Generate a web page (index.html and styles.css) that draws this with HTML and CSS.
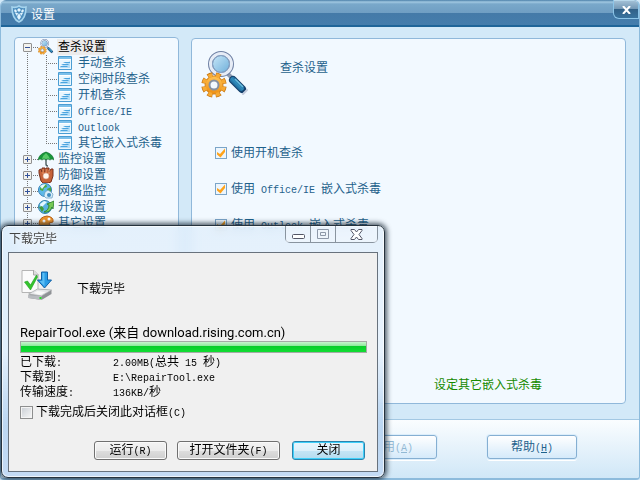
FILE: index.html
```html
<!DOCTYPE html>
<html lang="zh-CN">
<head>
  <meta charset="UTF-8">
  <meta name="viewport" content="width=device-width, initial-scale=1.0">
  <title>设置</title>
  <link rel="stylesheet" href="styles.css">
</head>
<body>
  <!-- shared icons -->
  <svg class="defs" width="0" height="0" aria-hidden="true">
    <defs>
      <linearGradient id="gold" x1="0" y1="0" x2="0" y2="1">
        <stop offset="0" stop-color="#ffc456"/>
        <stop offset="1" stop-color="#ee8e10"/>
      </linearGradient>
      <linearGradient id="lens" x1="0" y1="0" x2="1" y2="1">
        <stop offset="0" stop-color="#d2eefc"/>
        <stop offset="1" stop-color="#64a8d6"/>
      </linearGradient>
      <linearGradient id="handle" x1="0" y1="1" x2="1" y2="0">
        <stop offset="0" stop-color="#0f4678"/>
        <stop offset=".5" stop-color="#2f8cbc"/>
        <stop offset="1" stop-color="#1c5488"/>
      </linearGradient>
    </defs>
    <symbol id="scan" viewBox="0 0 48 48">
      <path d="M27 23l5 5" stroke="#8d9bb2" stroke-width="4"/>
      <path d="M32 29l9 9" stroke="#14406c" stroke-width="8" stroke-linecap="round"/>
      <path d="M32 29l8 8" stroke="url(#handle)" stroke-width="6" stroke-linecap="round"/>
      <path d="M34 28l8 8" stroke="#6dbfe0" stroke-width="1.500"/>
      <path d="M42 43l4-4" stroke="#c3cbdc" stroke-width="2" stroke-linecap="round"/>
      <circle cx="20" cy="13" r="10.500" fill="url(#lens)" stroke="#6e80a4" stroke-width="5"/>
      <circle cx="20" cy="13" r="10.500" fill="none" stroke="#e6ecf6" stroke-width="3"/>
      <circle cx="20" cy="13" r="8.500" fill="none" stroke="#88a6c8" stroke-width="1"/>
      <g transform="rotate(8 13 34)">
        <circle cx="13" cy="34" r="10.500" stroke="#c87916" stroke-width="4.500" stroke-dasharray="5 3.246"/>
        <circle cx="13" cy="34" r="9" fill="url(#gold)" stroke="#d58217" stroke-width="1"/>
        <circle cx="13" cy="34" r="10" stroke="#f7aa33" stroke-width="4" stroke-dasharray="3.800 4.054" stroke-dashoffset="-.5"/>
      </g>
      <circle cx="13" cy="34" r="4.500" fill="#f2f9ff" stroke="#8690a0" stroke-width="2"/>
    </symbol>
    <symbol id="page" viewBox="0 0 14 14">
      <path d="M.5.5h13v13H.5z" fill="#eaf7fe" stroke="#4a9dd3"/>
      <path d="M1 1h12v2H1z" fill="#7cc0ea"/>
      <path d="M1 3h12v1H1z" fill="#fff"/>
      <path d="M2 12v-1l10-6v7z" fill="#b4def7"/>
      <path d="M7 6h5v1H5zM5 8h6l-1 1H3zM3 10h7l-1 1H2z" fill="#4ba5df"/>
    </symbol>
    <symbol id="umbrella" viewBox="0 0 16 16">
      <path d="M8 1v12q0 2 2 2" fill="none" stroke="#4c5d60" stroke-width="1.400"/>
      <path d="M0 9Q1 3 8 1q7 2 8 8-2-2-4 0-2-2-4 0-2-2-4 0-2-2-4 0z" fill="#18963a" stroke="#0b6c28" stroke-width=".6"/>
      <path d="M4 8Q5 4 8 2q3 3 4 6-2-1-4 0-2-1-4 0z" fill="#58ca68"/>
    </symbol>
    <symbol id="glove" viewBox="0 0 16 16">
      <path d="M3 14L1 6V3l2-1 1 3 0-4h3v4l1-4h3v4l2-3h2v7l-2 6-3 1H5z" fill="#c66239" stroke="#79301c" stroke-width="1"/>
      <path d="M5 2v5M8 2v5M11 3v4" stroke="#e7996a" stroke-width="1"/>
      <circle cx="8" cy="9" r="3" fill="#fff6ed" stroke="#d59c84" stroke-width=".6"/>
    </symbol>
    <symbol id="globe" viewBox="0 0 16 16">
      <circle cx="7" cy="7" r="6.500" fill="#5db8e8" stroke="#3380b8"/>
      <path d="M2 5q3-4 6-4l1 3-3 1-1 3-3-1zM9 6l4-2v5l-3 1z" fill="#4ea842"/>
      <path d="M2 3q3-2 6-2L4 6z" fill="#e5f7ff"/>
      <path d="M7 9l3-2 3 2 2 2-1 4H8l-2-2z" fill="#d8edf8" stroke="#6299be" stroke-width=".7"/>
      <circle cx="11" cy="12" r="2" fill="#3d8bc0"/>
    </symbol>
    <symbol id="upgrade" viewBox="0 0 16 16">
      <circle cx="7" cy="8" r="6.500" fill="#58b1df" stroke="#3583ac"/>
      <path d="M2 5l4-3 3 1-4 4-2 3z" fill="#e5f8ff"/>
      <path d="M1 8l3-1 2 3-2 3z" fill="#409b3c"/>
      <path d="M6 13q5-2 5-7L9 5l7-3-1 8-1-2q-2 6-8 5z" fill="#75c955" stroke="#247c27" stroke-width=".8"/>
    </symbol>
    <symbol id="other" viewBox="0 0 16 16">
      <path d="M1 9q0-7 8-8 7 1 6 6l-4 1 2 4-5 3Q2 14 1 9z" fill="#ef952c" stroke="#b95f12"/>
      <circle cx="6" cy="6" r="1.500" fill="#fff"/><circle cx="11" cy="4" r="1.500" fill="#fff"/>
    </symbol>
  </svg>

  <div class="window">
    <header class="titlebar">
      <svg class="shield" viewBox="0 0 16 18">
        <path d="M8 1q3 2 7 1 0 12-7 15Q1 14 1 2q4 1 7-1z" fill="#4f8fbf" stroke="#a5d4ee" stroke-width="1.600"/>
        <path d="M8 3l2 2-2 2-2-2zM4 4l2 2-1 2-2-2zM12 4l1 2-2 2-1-2zM4 8l3 0-1 3zM9 8l3 0-2 3zM8 8l2 4-2 3-2-3z" fill="#e2f5ff"/>
      </svg>
      <h1>设置</h1>
      <button class="close" aria-label="关闭设置">
        <svg viewBox="0 0 9 8"><path d="M1 0l7 8M8 0L1 8" stroke="#fff" stroke-width="2"/></svg>
      </button>
    </header>

    <main class="content">
      <nav class="sidebar">
        <ul class="tree">
          <li>
            <div class="node"><button class="toggle minus" aria-label="收起"></button><svg class="icon"><use href="#scan"/></svg><span class="label selected">查杀设置</span></div>
            <ul class="children">
              <li><svg class="page"><use href="#page"/></svg>手动查杀</li>
              <li><svg class="page"><use href="#page"/></svg>空闲时段查杀</li>
              <li><svg class="page"><use href="#page"/></svg>开机查杀</li>
              <li><svg class="page"><use href="#page"/></svg><span><span class="en">Office/IE</span></span></li>
              <li><svg class="page"><use href="#page"/></svg><span><span class="en">Outlook</span></span></li>
              <li><svg class="page"><use href="#page"/></svg>其它嵌入式杀毒</li>
            </ul>
          </li>
          <li class="node"><button class="toggle" aria-label="展开"></button><svg class="icon"><use href="#umbrella"/></svg><span class="label">监控设置</span></li>
          <li class="node"><button class="toggle" aria-label="展开"></button><svg class="icon"><use href="#glove"/></svg><span class="label">防御设置</span></li>
          <li class="node"><button class="toggle" aria-label="展开"></button><svg class="icon"><use href="#globe"/></svg><span class="label">网络监控</span></li>
          <li class="node"><button class="toggle" aria-label="展开"></button><svg class="icon"><use href="#upgrade"/></svg><span class="label">升级设置</span></li>
          <li class="node"><button class="toggle" aria-label="展开"></button><svg class="icon"><use href="#other"/></svg><span class="label">其它设置</span></li>
        </ul>
      </nav>

      <section class="panel">
        <div class="panel-head">
          <svg class="big-icon"><use href="#scan"/></svg>
          <h2>查杀设置</h2>
        </div>
        <div class="options">
          <label><input type="checkbox" checked><span>使用开机查杀</span></label>
          <label><input type="checkbox" checked><span>使用<span class="en"> Office/IE </span>嵌入式杀毒</span></label>
          <label><input type="checkbox" checked><span>使用<span class="en"> Outlook </span>嵌入式杀毒</span></label>
        </div>
        <a class="more" href="#">设定其它嵌入式杀毒</a>
      </section>
    </main>

    <footer class="actions">
      <button class="action" disabled>应用<span class="en">(<u>A</u>)</span></button>
      <button class="action">帮助<span class="en">(<u>H</u>)</span></button>
    </footer>
  </div>

  <div class="dialog" role="dialog" aria-labelledby="dialog-title">
    <div class="dialog-bar">
      <h2 id="dialog-title">下载完毕</h2>
      <div class="controls">
        <button aria-label="最小化"><svg class="min" width="13" height="6" viewBox="0 0 13 6"><rect x=".5" y=".5" width="12" height="4" rx="1" fill="#fff" stroke="#535666"/></svg></button>
        <button aria-label="最大化" disabled><svg width="12" height="10" viewBox="0 0 12 10"><path d="M.5.5h11v9H.5zM3.500 3.500h5v3h-5z" fill="#eef5fc" stroke="#8d98a8"/></svg></button>
        <button class="wide" aria-label="关闭窗口"><svg width="13" height="11" viewBox="0 0 13 11"><path d="M1 .5h3.500l2 2.500 2-2.500H12v1L9 5.500l3 4v1H8.500l-2-2.500-2 2.500H1v-1l3-4-3-4z" fill="#fff" stroke="#535666"/></svg></button>
      </div>
    </div>
    <div class="client">
      <div class="dialog-head">
        <svg class="download" viewBox="0 0 32 32">
          <path d="M1.500 1.500h12l4 4v18h-16z" fill="#fbfbfb" stroke="#b5b5b5"/>
          <path d="M13 1v5h5" fill="#ddd" stroke="#aaa"/>
          <path d="M8 26l9-6 14 1v4l-10 6-13-2z" fill="#8f9296"/>
          <path d="M8 25l9-5 14 1-10 6z" fill="#e5e6e9" stroke="#a5a7aa" stroke-width=".7"/>
          <path d="M8 26l13 1v4L8 29z" fill="#b9bcc1"/>
          <path d="M19 28h2v2h-2z" fill="#24dd25"/>
          <path d="M13 24l4-2 8 1-5 3z" fill="#fafafa"/>
          <path d="M4 13l3-1 3 4 6-10 1 2-7 13z" fill="#35c52c" stroke="#1a9b20" stroke-width=".6"/>
          <path d="M21 3h6v8h4l-7 8-7-8h4z" fill="#2b9de6" stroke="#1262a8"/>
          <path d="M22 4h2v13l-5-5h3z" fill="#5cbef4"/>
        </svg>
        <p>下载完毕</p>
      </div>
      <p class="file">RepairTool.exe (来自 download.rising.com.cn)</p>
      <div class="progress" role="progressbar" aria-label="下载进度" aria-valuenow="100"></div>
      <dl class="info">
        <dt>已下载<span class="en">:</span></dt>
        <dd><span class="en">2.00MB(</span>总共<span class="en"> 15 </span>秒<span class="en">)</span></dd>
        <dt>下载到<span class="en">:</span></dt>
        <dd><span class="en">E:\RepairTool.exe</span></dd>
        <dt>传输速度<span class="en">:</span></dt>
        <dd><span class="en">136KB/</span>秒</dd>
      </dl>
      <label class="auto-close"><input type="checkbox"><span>下载完成后关闭此对话框<span class="en">(C)</span></span></label>
      <div class="buttons">
        <button>运行<span class="en">(R)</span></button>
        <button class="long">打开文件夹<span class="en">(F)</span></button>
        <button class="default">关闭</button>
      </div>
    </div>
  </div>
</body>
</html>
```

FILE: styles.css
```css
* {
  box-sizing: border-box;
}

body {
  margin: 0;
  background: #d3e9f8;
  color: #1f628c;
  font-family: "Liberation Sans", "Noto Sans CJK SC", sans-serif;
  font-size: 12px;
  line-height: 16px;
}

h1, h2, p, ul, dl, dd {
  margin: 0;
  padding: 0;
  font-size: 12px;
  font-weight: normal;
}

ul {
  list-style: none;
}

button {
  padding: 0;
  font: inherit;
  color: inherit;
}

svg {
  display: block;
  flex: none;
  fill: none;
}

.defs {
  position: absolute;
}

/* latin text inside the chinese labels */
.en {
  font-family: "Liberation Mono", monospace;
  font-size: 10px;
  line-height: 10px;
  white-space: pre;
}

/* settings window */
.window {
  display: flex;
  flex-direction: column;
  min-height: 100vh;
  border: solid #8dbbdc;
  border-width: 0 1px 2px;
  border-radius: 6px 6px 4px 4px;
  overflow: hidden;
}

.titlebar {
  display: flex;
  align-items: center;
  height: 27px;
  padding-left: 10px;
  background: linear-gradient(#4b7fa8 0, #a1c8e1 2px, #79a8ca 4px, #6f9ec3 13px, #447aa8 13px, #457dac 25px, #1f6599 25px);
  color: #fff;
}

.titlebar h1 {
  padding-top: 2px;
}

.shield {
  width: 16px;
  height: 18px;
  margin-right: 4px;
}

.close {
  display: flex;
  align-items: center;
  justify-content: center;
  align-self: flex-start;
  width: 26px;
  height: 19px;
  margin-left: auto;
  border: 1px solid #8cc5e8;
  border-top-color: #b8d8eb;
  border-radius: 0 5px 0 6px;
  background: linear-gradient(#a1bfd5, #7297b5 8px, #316087 8px, #39739e);
}

.close svg {
  width: 9px;
  height: 8px;
}

.content {
  display: flex;
  flex: 1;
  gap: 12px;
  padding: 11px 13px 15px;
}

.sidebar, .panel {
  border: 1px solid #90b8da;
  border-radius: 4px;
  background: #f2f9ff;
}

.sidebar {
  width: 165px;
  flex: none;
  margin-top: -1px;
  padding: 1px 0 0 8px;
}

/* dotted tree lines are drawn as backgrounds */
.tree > li {
  background: repeating-linear-gradient(#777 0 1px, transparent 1px 2px) 4px 0 / 1px 100% no-repeat;
}

.tree > li:first-child {
  background-position: 4px 8px;
}

.node {
  display: flex;
  align-items: center;
  height: 16px;
}

.toggle {
  width: 9px;
  height: 9px;
  border: 1px solid #919191;
  border-radius: 1px;
  background:
    linear-gradient(#33529a, #33529a) center / 5px 1px no-repeat,
    linear-gradient(#33529a, #33529a) center / 1px 5px no-repeat,
    #f2f2ee;
}

.minus {
  background:
    linear-gradient(#33529a, #33529a) center / 5px 1px no-repeat,
    #f2f2ee;
}

.icon {
  width: 22px;
  height: 16px;
  padding-left: 6px;
  background: repeating-linear-gradient(90deg, #777 0 1px, transparent 1px 2px) 1px 8px / 6px 1px no-repeat;
}

.label {
  margin-left: 3px;
  padding: 0 1px;
}

.selected {
  background: #ececec;
  color: #000;
}

.children li {
  display: flex;
  align-items: center;
  height: 16px;
  padding-left: 23px;
  background:
    repeating-linear-gradient(#777 0 1px, transparent 1px 2px) 23px 0 / 1px 100% no-repeat,
    repeating-linear-gradient(90deg, #777 0 1px, transparent 1px 2px) 25px 8px / 10px 1px no-repeat;
}

.children li:last-child {
  background-size: 1px 9px, 10px 1px;
}

.page {
  width: 14px;
  height: 14px;
  margin: 0 6px 0 12px;
}

.panel {
  display: flex;
  flex: 1;
  flex-direction: column;
  padding: 12px 9px 10px;
}

.panel-head {
  display: flex;
  gap: 31px;
}

.panel-head h2 {
  padding-top: 9px;
}

.big-icon {
  width: 48px;
  height: 48px;
}

.options {
  display: flex;
  flex-direction: column;
  align-items: flex-start;
  gap: 20px;
  padding: 46px 0 0 14px;
}

.options label, .auto-close {
  display: flex;
  align-items: center;
}

.options input {
  appearance: none;
  width: 12px;
  height: 12px;
  margin: 0 4px 0 0;
  border: 1px solid #7ba5c8;
  background: #edf6fd;
}

.options input:checked::before {
  content: "";
  display: block;
  width: 10px;
  height: 10px;
  background: #ffa31a;
  clip-path: polygon(10% 40%, 40% 60%, 90% 5%, 90% 40%, 45% 95%, 10% 65%);
}

.more {
  align-self: flex-end;
  margin: auto 74px 0 0;
  color: #168a00;
  text-decoration: none;
}

.actions {
  display: flex;
  justify-content: flex-end;
  gap: 50px;
  padding: 15px 62px 19px;
  border-top: 1px solid #a3c8e3;
  background: linear-gradient(#fafdff, #d0e7f7);
}

.action {
  width: 90px;
  height: 24px;
  border: 1px solid #85afd2;
  border-radius: 3px;
  background: linear-gradient(#fff, #d5eafa);
  box-shadow: 0 0 0 1px #dceefb, 0 2px 0 #fff;
}

.action:disabled {
  color: #91b9d4;
}

/* download dialog floats over the settings window */
.dialog {
  position: absolute;
  left: 1px;
  bottom: 2px;
  width: 384px;
  padding: 0 6px 5px;
  border: 1px solid #26323d;
  border-radius: 7px;
  background: linear-gradient(rgba(224, 238, 251, .8), rgba(229, 241, 253, .8) 50%, rgba(181, 210, 240, .9) 80%, rgba(194, 217, 243, .9));
  backdrop-filter: blur(4px);
  box-shadow: inset 0 0 0 1px rgba(255, 255, 255, .7), 0 0 5px 2px rgba(10, 25, 40, .7);
  color: #000;
}

.dialog-bar {
  display: flex;
  align-items: center;
  justify-content: space-between;
  height: 26px;
  padding-left: 1px;
}

.dialog-bar h2 {
  color: #444;
  text-shadow: 0 0 5px #fff;
}

.controls {
  display: flex;
  align-self: flex-start;
  border: 1px solid #89949f;
  border-top: 0;
  border-radius: 0 0 5px 5px;
}

.controls button {
  display: flex;
  align-items: center;
  justify-content: center;
  width: 25px;
  height: 16px;
  border: 0;
  border-right: 1px solid #89949f;
  background: rgba(245, 250, 255, .5);
}

.controls .wide {
  width: 41px;
  border-right: 0;
}

.min {
  margin-top: 5px;
}

.client {
  padding: 16px 10px 11px 11px;
  border: 1px solid #68727d;
  background: #f0f0f0;
}

.dialog-head {
  display: flex;
  align-items: center;
  gap: 24px;
}

.dialog-head p {
  padding-top: 8px;
}

.download {
  width: 33px;
  height: 32px;
}

.file {
  margin-top: 24px;
  font-family: Roboto, "Noto Sans CJK SC", sans-serif;
  font-size: 13px;
}

.progress {
  height: 12px;
  border: 1px solid #a5aaa5;
  background: linear-gradient(#c8f5cf, #8be999 4px, #08cc28 4px, #12dd34);
}

.info {
  display: grid;
  grid-template-columns: 93px 1fr;
  margin-top: 2px;
  line-height: 15px;
}

.auto-close {
  margin-top: 4px;
}

.auto-close input {
  appearance: none;
  width: 13px;
  height: 13px;
  margin: 0 3px 0 0;
  border: 1px solid #8e8f8f;
  background: linear-gradient(135deg, #c9ced4, #f8f8f8);
  box-shadow: inset 0 0 0 1px #f4f4f4;
}

.buttons {
  display: flex;
  justify-content: flex-end;
  gap: 10px;
  margin-top: 21px;
  padding-right: 2px;
}

.buttons button {
  width: 73px;
  height: 19px;
  border: 1px solid #707070;
  border-radius: 3px;
  background: linear-gradient(#f3f3f3, #ebebeb 9px, #dddddd 9px, #cfcfcf);
  box-shadow: inset 0 0 0 1px #fafafa;
  line-height: 17px;
}

.buttons .long {
  width: 103px;
}

.buttons .default {
  margin-left: 2px;
  border-color: #2b83ad;
  background: linear-gradient(#eaf6fc, #dcf0fa 9px, #c4e5f6 9px, #b5dcef);
  box-shadow: inset 0 0 0 1px #3fd0fa;
}
```
